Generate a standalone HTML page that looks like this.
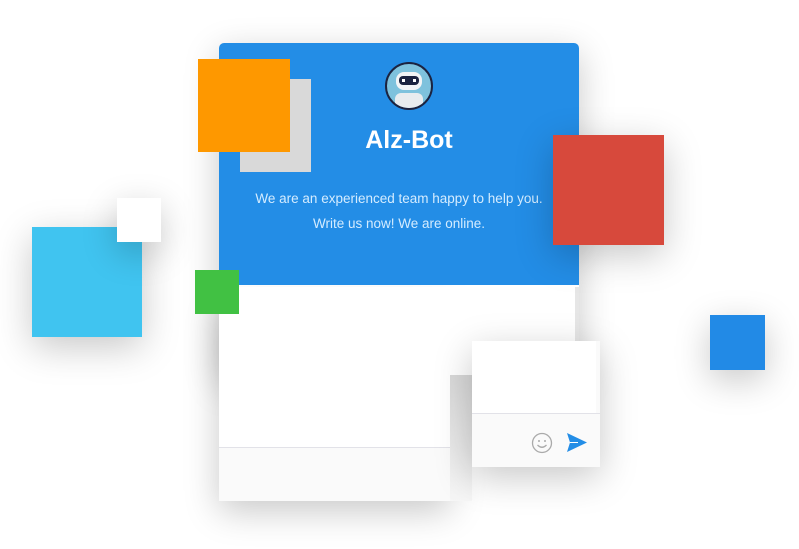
<!DOCTYPE html>
<html><head><meta charset="utf-8"><style>
body{margin:0;width:799px;height:549px;background:#fff;position:relative;overflow:hidden;font-family:"Liberation Sans",sans-serif}
div{position:absolute;box-sizing:border-box}
.sh{box-shadow:0 10px 35px rgba(0,0,0,.22)}
</style></head><body>
<div class="sh" style="left:219px;top:43px;width:360px;height:332px;background:#fff;border-radius:5px 5px 0 0"></div>
<div class="sh" style="left:219px;top:300px;width:231px;height:201px;background:#fff;border-radius:0 0 3px 3px"></div>
<div style="left:219px;top:43px;width:360px;height:242px;background:#238de6;border-radius:5px 5px 0 0"></div>
<div style="left:219px;top:287px;width:356px;height:160px;background:#fff"></div>
<div style="left:575px;top:287px;width:4px;height:88px;background:#e6e6e6"></div>
<div style="left:219px;top:447px;width:231px;height:54px;background:#fafafa;border-top:1px solid #e2e2e8"></div>
<div style="left:450px;top:375px;width:22px;height:126px;background:linear-gradient(#d8d8d8,#f6f6f6)"></div>
<div style="left:240px;top:79px;width:71px;height:93px;background:#d9d9d9"></div>
<div style="left:385px;top:62px;width:48px;height:48px;border-radius:50%;background:#7ec2dd;border:2px solid #1b2340;overflow:hidden">
 <div style="left:9px;top:8px;width:26px;height:18px;background:#f2f4f6;border-radius:8px"></div>
 <div style="left:12px;top:12px;width:20px;height:9px;background:#1b2340;border-radius:4px"></div>
 <div style="left:15px;top:15px;width:3px;height:3px;background:#fff"></div>
 <div style="left:26px;top:15px;width:3px;height:3px;background:#fff"></div>
 <div style="left:8px;top:29px;width:28px;height:20px;background:#e8ecef;border-radius:6px"></div>
</div>
<div style="left:219px;top:126px;width:380px;text-align:center;color:#fff;font-weight:bold;font-size:25px">Alz-Bot</div>
<div style="left:219px;top:186px;width:360px;text-align:center;color:#d4ecff;font-size:13.5px;line-height:25px">We are an experienced team happy to help you.<br>Write us now! We are online.</div>
<div style="left:198px;top:59px;width:92px;height:93px;background:#fe9800"></div>
<div class="sh" style="left:553px;top:135px;width:111px;height:110px;background:#d7493c"></div>
<div class="sh" style="left:32px;top:227px;width:110px;height:110px;background:#40c4f0"></div>
<div class="sh" style="left:117px;top:198px;width:44px;height:44px;background:#fff"></div>
<div style="left:195px;top:270px;width:44px;height:44px;background:#41c143"></div>
<div class="sh" style="left:710px;top:315px;width:55px;height:55px;background:#228ae6"></div>
<div class="sh" style="left:472px;top:341px;width:128px;height:126px;background:#fafafa"></div>
<div style="left:472px;top:341px;width:124px;height:72px;background:#fff"></div>
<div style="left:472px;top:413px;width:128px;height:1px;background:#e2e2e8"></div>
<svg style="position:absolute;left:531px;top:432px" width="22" height="22" viewBox="0 0 22 22"><circle cx="11" cy="11" r="9.5" fill="none" stroke="#aaa" stroke-width="1.3"/><circle cx="8" cy="9" r="1" fill="#aaa"/><circle cx="14" cy="9" r="1" fill="#aaa"/><path d="M6.5 13 Q11 17.5 15.5 13" fill="none" stroke="#aaa" stroke-width="1.3"/></svg>
<svg style="position:absolute;left:567px;top:433px" width="20" height="19" viewBox="0 0 20 19"><path d="M0 0 L20 9.5 L0 19 L3 9.5 Z" fill="#238de6"/><path d="M3 9.5 L11 9.5" stroke="#fff" stroke-width="1"/></svg>
</body></html>
